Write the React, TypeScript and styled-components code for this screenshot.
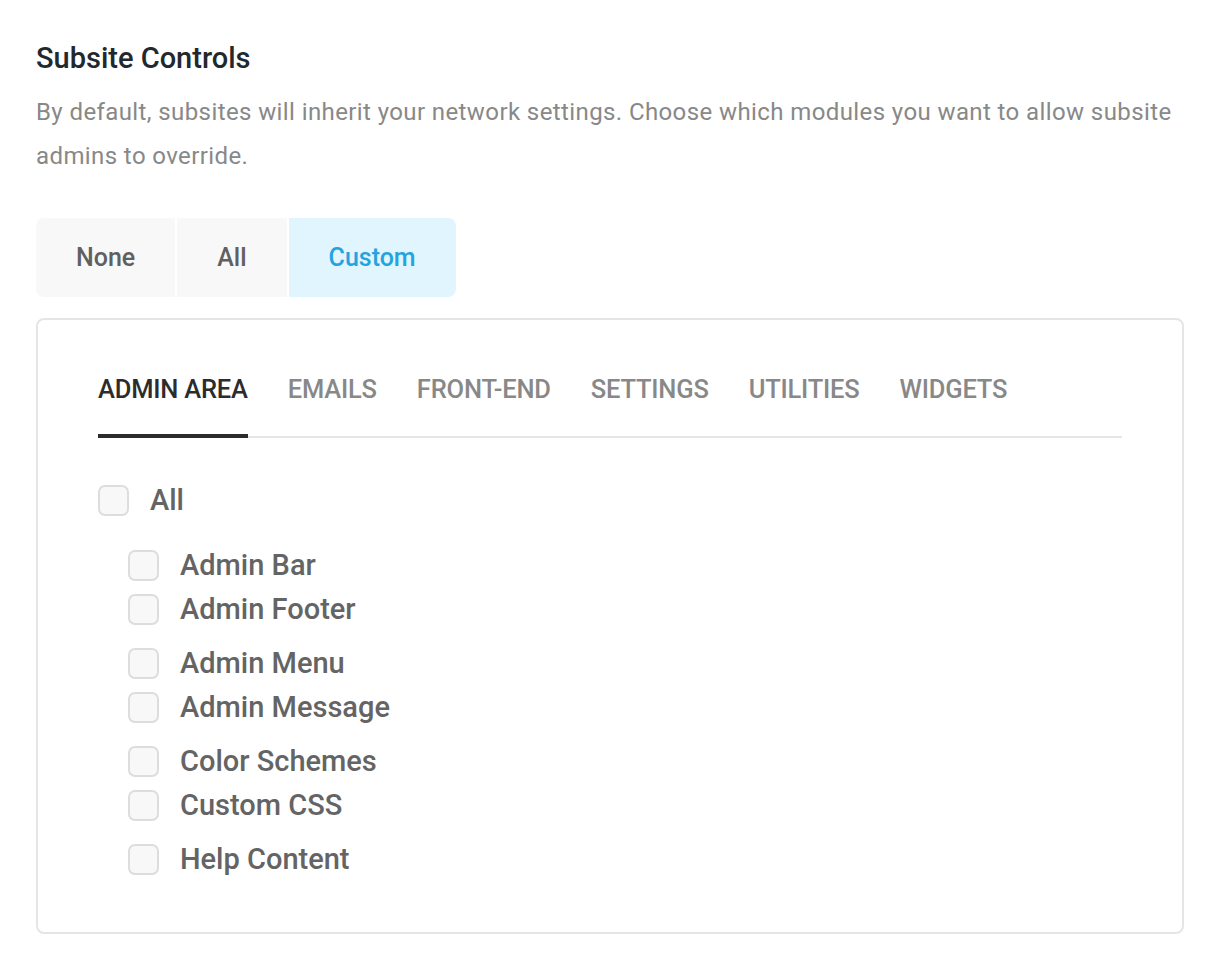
import styled, { createGlobalStyle } from 'styled-components'

const GlobalStyle = createGlobalStyle`
  body {
    margin: 0;
    background: #ffffff;
    font-family: Roboto, "Liberation Sans", sans-serif;
  }
`

const Page = styled.div`
  padding: 40px 36px 36px;
`

const Title = styled.h2`
  margin: 0;
  font-size: 29px;
  line-height: 36px;
  font-weight: 500;
  color: #23282d;
`

const Description = styled.p`
  margin: 14px 0 0;
  font-size: 24px;
  line-height: 44px;
  letter-spacing: 0.4px;
  color: #888888;
  max-width: 1148px;
`

const Segmented = styled.div`
  display: flex;
  gap: 2px;
  margin-top: 40px;
  height: 79px;
  width: max-content;
  border-radius: 8px;
  overflow: hidden;
`

const SegmentButton = styled.button<{ $active?: boolean }>`
  border: 0;
  padding: 0 40px;
  font-family: inherit;
  font-size: 25px;
  font-weight: 500;
  background: ${(p) => (p.$active ? '#e1f5fe' : '#f8f8f8')};
  color: ${(p) => (p.$active ? '#25a3df' : '#606060')};
  cursor: pointer;
`

const Panel = styled.div`
  margin-top: 21px;
  border: 2px solid #e5e5e5;
  border-radius: 8px;
  padding: 55px 60px 51px;
`

const TabList = styled.div`
  display: flex;
  gap: 40px;
  border-bottom: 2px solid #e6e6e6;
`

const Tab = styled.div<{ $active?: boolean }>`
  font-size: 25.5px;
  line-height: 28px;
  font-weight: 500;
  text-transform: uppercase;
  padding-bottom: 31px;
  margin-bottom: -2px;
  color: ${(p) => (p.$active ? '#2c2c2c' : '#888888')};
  border-bottom: 4px solid ${(p) => (p.$active ? '#2c2c2c' : 'transparent')};
  letter-spacing: -0.2px;
`

const CheckRow = styled.label<{ $indent?: boolean }>`
  display: flex;
  align-items: center;
  gap: 21px;
  height: 44px;
  padding-left: ${(p) => (p.$indent ? '30px' : '0')};
  font-size: 29px;
  font-weight: 500;
  color: #646464;
  cursor: pointer;
`

const Box = styled.span`
  width: 31px;
  height: 31px;
  box-sizing: border-box;
  border: 2px solid #dddddd;
  border-radius: 7px;
  background: #f8f8f8;
  flex: none;
`

const AllRow = styled.div`
  margin-top: 40px;
`

const Groups = styled.div`
  display: flex;
  flex-direction: column;
  gap: 10px;
  margin-top: 21px;
`

const Group = styled.div`
  display: flex;
  flex-direction: column;
`

const tabs = ['Admin Area', 'Emails', 'Front-end', 'Settings', 'Utilities', 'Widgets']

const modules = [
  ['Admin Bar', 'Admin Footer'],
  ['Admin Menu', 'Admin Message'],
  ['Color Schemes', 'Custom CSS'],
  ['Help Content'],
]

export default function App() {
  return (
    <>
      <GlobalStyle />
      <Page>
        <Title>Subsite Controls</Title>
        <Description>
          By default, subsites will inherit your network settings. Choose which modules you want to
          allow subsite admins to override.
        </Description>
        <Segmented>
          <SegmentButton>None</SegmentButton>
          <SegmentButton>All</SegmentButton>
          <SegmentButton $active>Custom</SegmentButton>
        </Segmented>
        <Panel>
          <TabList>
            {tabs.map((t, i) => (
              <Tab key={t} $active={i === 0}>
                {t}
              </Tab>
            ))}
          </TabList>
          <AllRow>
            <CheckRow>
              <Box />
              All
            </CheckRow>
          </AllRow>
          <Groups>
            {modules.map((group, gi) => (
              <Group key={gi}>
                {group.map((m) => (
                  <CheckRow key={m} $indent>
                    <Box />
                    {m}
                  </CheckRow>
                ))}
              </Group>
            ))}
          </Groups>
        </Panel>
      </Page>
    </>
  )
}
